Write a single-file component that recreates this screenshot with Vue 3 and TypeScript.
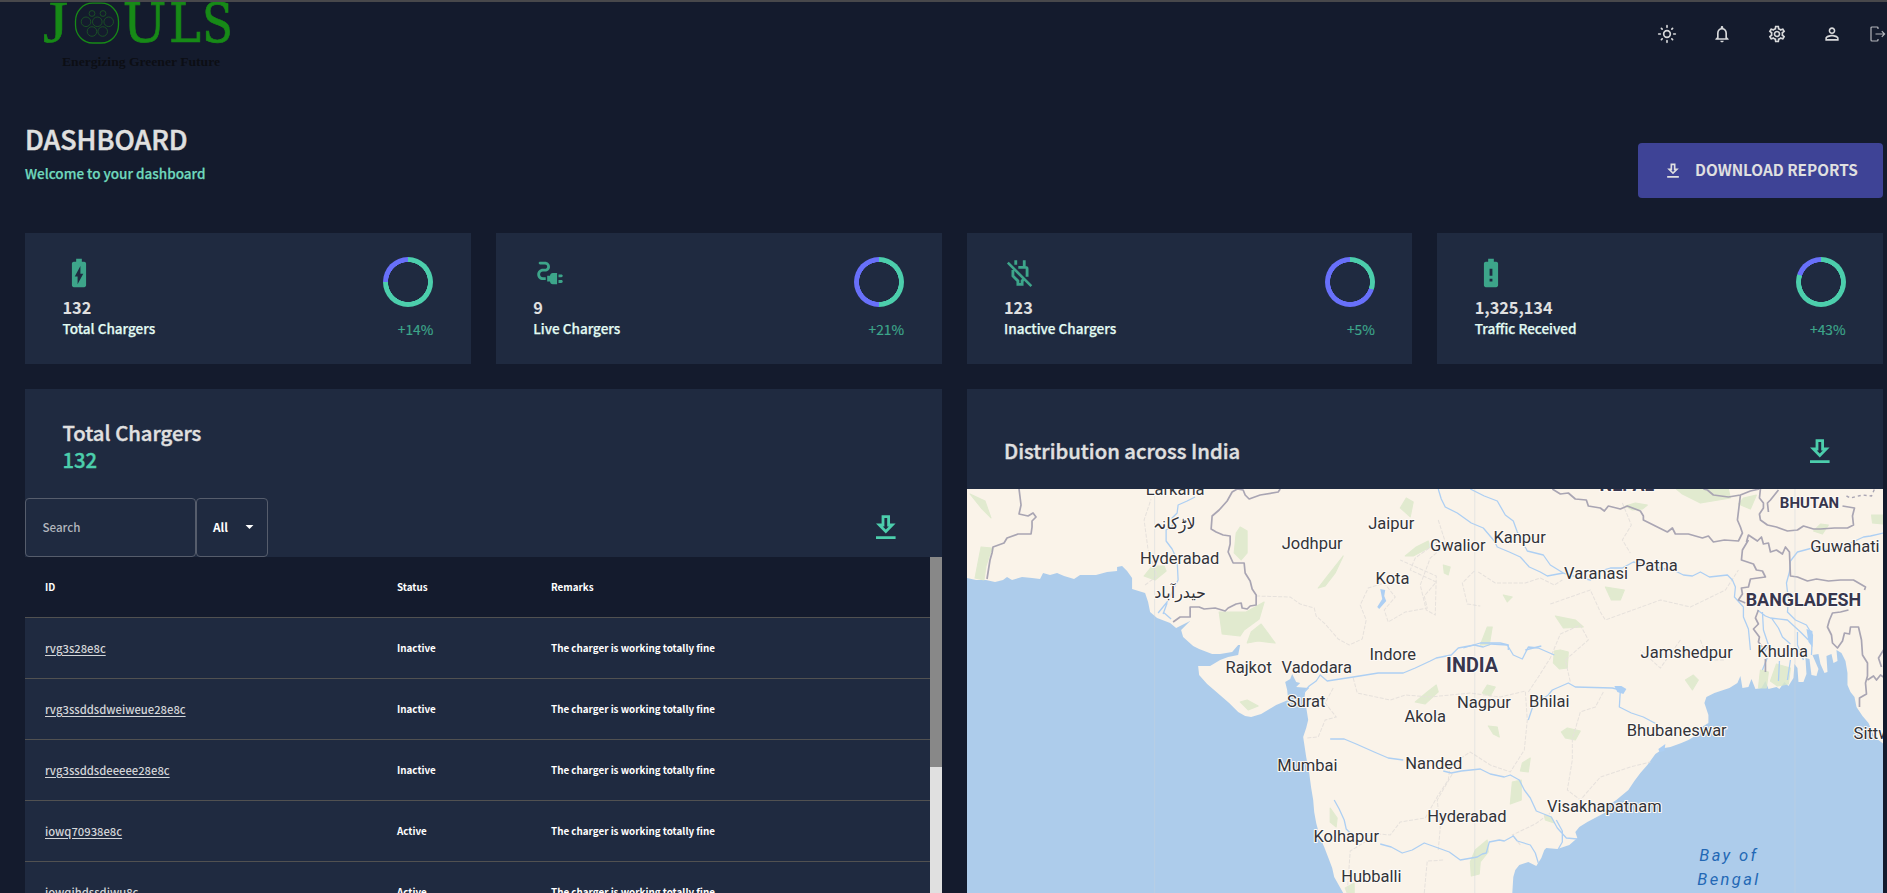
<script setup lang="ts">
interface Stat {
  icon: 'charging' | 'plug' | 'off' | 'alert'
  value: string
  label: string
  progress: number
  increase: string
}
interface Charger {
  id: string
  status: string
  remarks: string
}
interface MapLabel {
  text: string
  x: number
  y: number
  kind?: string
}

const stats: Stat[] = [
  { icon: 'charging', value: '132', label: 'Total Chargers', progress: 0.75, increase: '+14%' },
  { icon: 'plug', value: '9', label: 'Live Chargers', progress: 0.5, increase: '+21%' },
  { icon: 'off', value: '123', label: 'Inactive Chargers', progress: 0.3, increase: '+5%' },
  { icon: 'alert', value: '1,325,134', label: 'Traffic Received', progress: 0.8, increase: '+43%' },
]

const remarks = 'The charger is working totally fine'
const chargers: Charger[] = [
  { id: 'rvg3s28e8c', status: 'Inactive', remarks },
  { id: 'rvg3ssddsdweiweue28e8c', status: 'Inactive', remarks },
  { id: 'rvg3ssddsdeeeee28e8c', status: 'Inactive', remarks },
  { id: 'iowq70938e8c', status: 'Active', remarks },
  { id: 'iowqihdssdjwu8c', status: 'Active', remarks },
]

const ringStyle = (p: number) => ({
  background: `radial-gradient(closest-side, #1f2a40 78.5%, transparent 80.5%), conic-gradient(#4cceac 0deg ${p * 360}deg, #6870fa ${p * 360}deg 360deg)`,
})

const downloadPath = 'M19 9h-4V3H9v6H5l7 7 7-7zm-8 2V5h2v6h1.17L12 13.17 9.83 11H11zm-6 7h14v2H5z'
const batteryBody =
  'M15.67 4H14V2h-4v2H8.33C7.6 4 7 4.6 7 5.33v15.33C7 21.4 7.6 22 8.33 22h7.33c.74 0 1.34-.6 1.34-1.33V5.33C17 4.6 16.4 4 15.67 4z'

const land = [
  'M967 578 L976 580 986 580 995 582 1003 580 1007 577 1012 580 1022 577 1032 578 1040 579 1043 573 1050 575 1057 573 1064 576 1074 579 1080 575 1096 575 1107 572 1117 571 1117 567 1122 566 1127 571 1132 578 1132 589 1145 593 1148 602 1150 612 1157 618 1170 623 1176 628 1190 621 1181 630 1183 637 1193 646 1199 649 1212 654 1220 654 1232 652 1238 645 1240 645 1238 655 1228 657 1220 660 1210 666 1198 666 1199 675 1207 684 1214 690 1229 703 1238 712 1245 716 1251 717 1261 714 1276 705 1288 700 1287 690 1285 682 1290 679 1292 674 1296 682 1300 683 1296 687 1309 688 1305 692 1304 700 1306 707 1308 720 1306 728 1303 737 1306 757 1309 773 1311 788 1313 800 1314 812 1316 823 1320 838 1324 847 1329 860 1332 868 1334 877 1343 893',
  'L1512 893 1513 877 1515 870 1519 865 1528 862 1532 864 1536 866 1541 858 1544 850 1546 848 1557 849 1569 845 1577 838 1575 832 1579 827 1587 822 1604 813 1610 804 1616 800 1628 790 1634 781 1640 773 1647 765 1655 754 1664 748 1670 747 1681 743 1688 740 1693 737 1700 728 1708 723 1708 715 1704 703 1706 697 1714 693 1729 688 1737 683 1740 676 1742 688 1748 687 1751 679 1755 689 1761 688 1765 681 1768 689 1776 687 1779 689 1784 682 1788 686 1793 678 1794 664 1797 668 1798 682 1803 682 1806 674 1805 658 1809 659 1811 675 1816 676 1818 669 1812 655 1818 654 1820 664 1824 673 1827 672 1826 656 1831 654 1833 663 1837 661 1836 650 1841 653 1845 661 1847 673 1847 685 1850 692 1854 697 1856 707 1862 716 1868 723 1874 737 1883 744 1883 489 967 489Z',
].join(' ')

const borders = [
  'M1019 489 L1021 505 1019 514 1028 516 1033 513 1036 517 1032 521 1032 527 1031 534 1018 534 1007 538 1004 543 993 547 992 553 990 560 987 579',
  'M1280 489 L1278 492 1260 495 1249 499 1245 495 1243 490 1237 489 1232 492 1227 501 1219 510 1212 516 1211 529 1216 532 1223 535 1230 536 1230 544 1228 552 1233 563 1244 563 1245 573 1250 581 1252 589 1256 595 1256 605 1250 606 1247 609 1242 608 1241 603 1236 604 1228 608 1225 611 1215 608 1204 609 1199 607 1190 607 1190 617 1180 617 1173 622',
  'M1552 489 L1560 494 1568 493 1575 499 1586 500 1588 506 1600 508 1604 511 1608 506 1620 509 1627 506 1640 511 1643 516 1643 520 1657 527 1667 532 1672 528 1675 534 1688 534 1702 538 1708 536 1713 542 1724 540 1738 541 1742 533 1740 527 1737 520 1740 495 1728 497 1713 495 1707 490 1703 489M1740 495 L1750 491 1759 489',
  'M1760 489 L1759 498 1763 503 1763 508 1759 514 1760 520 1767 525 1776 527 1787 531 1797 530 1803 526 1813 529 1820 529 1834 528 1847 528 1853 525 1852 516 1854 508 1842 506M1768 512 L1767 503 1770 500 1778 490',
  'M1746 542 L1748 535 1757 541 1761 537 1763 544 1768 543 1770 552 1776 550 1782 554 1785 547 1789 552 1790 576 1797 577 1807 581 1816 579 1828 581 1840 580 1853 580 1865 587 1864 590',
  'M1748 540 L1742 550 1741 560 1753 564 1756 570 1762 571 1765 577 1750 579 1748 587 1741 588 1742 594 1738 600 1745 603M1758 610 L1755 618 1758 624 1753 629 1759 637 1758 642 1764 650M1765 659 L1765 672',
  'M1848 610 L1840 612 1832 613 1829 620 1827 627 1831 635 1832 643 1837 648 1842 641 1844 633 1849 634 1850 627 1858 627 1861 640 1862 655 1867 663 1867 676 1865 683 1866 694 1859 698 1859 707M1867 680 L1873 676 1876 680 1880 675 1883 677M1883 650 L1878 658 1881 667',
]

const rivers = [
  'M1195 497 L1187 501 1178 505 1177 513 1172 518 1173 525 1166 530 1166 541 1172 549 1177 560 1178 580 1172 592 1167 602 1158 613M1167 603 L1163 614M1163 612 L1171 619',
  'M1438 489 L1441 499 1445 507 1457 513 1471 523 1483 528 1494 541 1497 547 1509 552 1520 557 1529 567 1540 572 1547 576 1563 573',
  'M1470 489 L1484 496 1497 501 1505 515 1513 521 1517 532 1527 551 1543 555 1550 565 1563 573 1577 577 1590 580 1600 571 1610 568 1622 568 1633 562 1650 566 1675 571 1683 575 1692 576 1700 572 1709 577 1727 575 1732 580 1735 587 1734 597 1743 607 1743 617 1748 629 1750 650',
  'M1883 533 L1870 536 1863 537 1850 543 1830 550 1812 548 1797 552 1790 561 1789 572 1786 583 1788 600 1787 612 1795 620 1806 625 1812 635 1811 655',
  'M1757 610 L1765 616 1770 618 1787 620 1800 632 1808 640M1762 612 L1763 630 1768 645 1763 654M1771 618 L1778 628 1782 637 1790 644M1797 632 L1797 645 1803 660M1770 650 L1762 670M1779 661 L1778 681M1790 660 L1787 680',
  'M1303 693 L1309 686 1316 681 1320 675 1327 681 1353 677 1378 673 1403 673 1415 668 1430 661 1436 658 1451 655 1458 648 1474 645 1483 647 1491 644 1507 645 1513 655 1522 659 1528 647 1538 648 1554 655',
  'M1463 648 L1480 643 1500 643 1508 645 1508 650M1525 650 L1541 646',
  'M1528 720 L1532 708 1536 703 1548 695 1552 690 1568 683 1575 687 1612 688 1620 690 1619 707 1631 713 1643 717 1658 725',
  'M1330 739 L1344 739 1356 744 1374 752 1388 758 1403 760M1443 771 L1451 773 1461 771 1480 769 1490 774 1504 777 1510 775 1519 780 1524 790 1530 798 1536 811 1551 817 1557 828 1566 838 1577 839M1556 820 L1562 831 1562 842 1558 849',
  'M1334 800 L1339 809 1344 820 1346 829 1354 837M1380 844 L1391 847 1402 853 1412 850 1424 843 1438 848 1449 852 1460 860 1477 857 1482 854 1486 853 1489 842 1499 840 1504 841 1513 836 1517 841 1530 845 1535 853 1538 863',
]

const stateLines = [
  'M1256 596 L1290 597 1300 604 1314 608 1316 616 1325 624 1338 639 1349 645 1362 639 1366 620 1360 605 1368 588 1384 583 1395 597 1384 610 1388 622 1405 612 1427 608 1424 596 1436 582 1410 570 1415 558 1440 540',
  'M1145 585 L1157 576 1148 550 1144 520 1151 499',
  'M1438 520 L1446 545 1430 558 1420 585 1426 610 1435 615 1436 576 1400 560',
  'M1622 503 L1631 525 1622 540 1630 553M1478 572 L1495 583 1525 583 1540 578 1554 585 1562 580M1474 571 L1462 583 1467 604 1480 606',
  'M1550 604 L1590 590 1600 612 1605 620 1627 612 1660 600 1690 607 1725 590 1738 570',
  'M1353 678 L1357 693 1390 700 1405 695 1430 697 1470 693 1500 697 1525 691 1527 720 1524 750 1510 772 1490 765 1470 752 1450 765 1448 780 1438 795 1425 818 1400 822 1390 835 1378 834 1350 851 1347 893',
  'M1528 692 L1538 677 1550 658 1560 634 1580 625 1588 640 1565 660 1570 682',
  'M1603 692 L1595 707 1580 712 1572 739 1572 760 1567 790 1580 800 1600 777 1630 767 1650 762',
  'M1452 774 L1437 800 1440 828 1438 850M1520 845 L1512 835 1535 824 1550 813M1424 893 L1427 861 1444 860',
  'M1333 688 L1325 703 1336 717 1325 720 1318 737 1306 738M1680 640 L1660 668 1640 650M1700 640 L1708 660 1725 660',
]

const greens = [
  'M1240 527 L1247 531 1247 553 1241 560 1234 553 1236 533Z',
  'M1152 566 L1164 566 1166 571 1155 580 1144 576Z',
  'M1219 612 L1246 612 1264 602 1259 619 1244 630 1240 636 1222 634Z',
  'M1251 632 L1261 624 1275 643 1258 641 1247 643Z',
  'M1400 508 L1406 498 1413 502 1410 517Z',
  'M1405 556 L1416 547 1428 541 1430 547 1413 556Z',
  'M1318 588 L1328 575 1343 556 1335 573 1325 586Z',
  'M970 494 L985 501 991 518 982 509Z',
  'M981 547 L992 548 986 566 984 580 975 578Z',
  'M1625 506 L1635 503 1647 505 1642 509 1632 510Z',
  'M1676 489 L1728 489 1730 498 1700 503 1682 494Z',
  'M1743 498 L1756 495 1750 509 1738 504Z',
  'M1605 587 L1624 590 1620 600 1611 600Z',
  'M1555 616 L1575 620 1583 627 1563 628Z',
  'M1487 627 L1492 627 1489 645 1480 645Z',
  'M1554 651 L1560 650 1568 652 1567 668 1559 669 1553 663Z',
  'M1427 692 L1436 685 1438 692 1425 704 1415 702Z',
  'M1487 685 L1495 687 1490 696 1482 693Z',
  'M1488 726 L1497 727 1499 737 1493 734Z',
  'M1522 763 L1530 758 1528 772 1520 771Z',
  'M1512 782 L1521 780 1521 800 1510 804Z',
  'M1470 862 L1475 850 1487 840 1488 852 1480 862 1479 874 1471 876Z',
  'M1561 732 L1567 728 1580 731 1575 740 1565 738Z',
  'M1685 680 L1693 675 1698 680 1692 690Z',
  'M1760 670 L1768 672 1766 688 1758 688ZM1776 664 L1790 668 1788 684 1777 686 1770 681Z',
  'M1240 702 L1247 700 1258 706 1248 710Z',
  'M1330 808 L1337 818 1336 827 1330 822Z',
  'M1544 815 L1551 817 1554 823 1545 820Z',
  'M1820 524 L1828 525 1822 534 1813 531ZM1871 515 L1883 515 1883 524 1872 523Z',
  'M1345 888 L1354 883 1354 893 1347 893Z',
  'M1443 565 L1450 567 1448 575 1444 573ZM1503 595 L1512 597 1507 602Z',
]

const labels: MapLabel[] = [
  { text: 'Larkana', x: 1175, y: 495 },
  { text: 'لاڑکانہ', x: 1174, y: 529, kind: 'urdu' },
  { text: 'Hyderabad', x: 1179.5, y: 564 },
  { text: 'حیدرآباد', x: 1180, y: 598.5, kind: 'urdu' },
  { text: 'Jodhpur', x: 1312, y: 549 },
  { text: 'Jaipur', x: 1391, y: 529 },
  { text: 'Kota', x: 1392.3, y: 584 },
  { text: 'Gwalior', x: 1457.5, y: 551.5 },
  { text: 'Kanpur', x: 1519.3, y: 543.5 },
  { text: 'Varanasi', x: 1595.7, y: 579 },
  { text: 'Patna', x: 1656, y: 571 },
  { text: 'NEPAL', x: 1626.5, y: 491, kind: 'country' },
  { text: 'BHUTAN', x: 1809, y: 508.3, kind: 'country small' },
  { text: 'Guwahati', x: 1844.5, y: 552.3 },
  { text: 'BANGLADESH', x: 1803, y: 605.7, kind: 'country' },
  { text: 'Jamshedpur', x: 1686.3, y: 658 },
  { text: 'Khulna', x: 1782.2, y: 657.3 },
  { text: 'Indore', x: 1392.6, y: 660.4 },
  { text: 'INDIA', x: 1471.8, y: 672.3, kind: 'country big' },
  { text: 'Rajkot', x: 1248.5, y: 673.5 },
  { text: 'Vadodara', x: 1316.5, y: 673.5 },
  { text: 'Surat', x: 1306, y: 707 },
  { text: 'Akola', x: 1425, y: 722 },
  { text: 'Nagpur', x: 1483.7, y: 708.5 },
  { text: 'Bhilai', x: 1549, y: 706.7 },
  { text: 'Bhubaneswar', x: 1676.3, y: 735.7 },
  { text: 'Sittwe', x: 1876, y: 739 },
  { text: 'Mumbai', x: 1307.2, y: 771.3 },
  { text: 'Nanded', x: 1433.5, y: 768.7 },
  { text: 'Visakhapatnam', x: 1604, y: 812 },
  { text: 'Hyderabad', x: 1466.7, y: 822.5 },
  { text: 'Kolhapur', x: 1346, y: 842.3 },
  { text: 'Hubballi', x: 1371.2, y: 882.3 },
  { text: 'Bay of', x: 1728.5, y: 861, kind: 'water' },
  { text: 'Bengal', x: 1728.5, y: 885.5, kind: 'water' },
]
</script>

<template>
  <div class="app">
    <header class="topbar">
      <svg class="logo" width="200" height="72" viewBox="40 2 200 72">
        <g class="logo-word">
          <text x="43" y="41.7" textLength="25" lengthAdjust="spacingAndGlyphs" class="logo-j">J</text>
          <text x="122.5" y="41.7" textLength="44" lengthAdjust="spacingAndGlyphs">U</text>
          <text x="169" y="41.7" textLength="32" lengthAdjust="spacingAndGlyphs">L</text>
          <text x="202" y="41.7" textLength="31" lengthAdjust="spacingAndGlyphs">S</text>
        </g>
        <rect x="75.5" y="3.2" width="43" height="39.8" rx="17" ry="18" fill="none" stroke="#178a17" stroke-width="1.3" />
        <g fill="none" stroke="#1c5a24" stroke-width="0.8">
          <circle cx="92" cy="13.5" r="2.9" />
          <circle cx="103" cy="13.5" r="2.9" />
          <circle cx="86" cy="21.8" r="4.8" />
          <circle cx="97.3" cy="21.8" r="4.8" />
          <circle cx="108.7" cy="21.8" r="4.8" />
          <circle cx="92" cy="31.5" r="4.8" />
          <circle cx="102.7" cy="31.5" r="4.8" />
        </g>
        <text class="logo-tag" x="62" y="65.5" textLength="158" lengthAdjust="spacingAndGlyphs">Energizing Greener Future</text>
      </svg>
      <nav class="actions">
        <svg class="ico" viewBox="0 0 24 24">
          <g fill="none" stroke="currentColor" stroke-width="2" stroke-linecap="round">
            <circle cx="12" cy="12" r="4" />
            <path d="M12 2v2M12 20v2M2 12h2M20 12h2M5.3 5.3l.9.9M17.8 17.8l.9.9M5.3 18.7l.9-.9M17.8 6.2l.9-.9" />
          </g>
        </svg>
        <svg class="ico" viewBox="0 0 24 24">
          <path fill="currentColor" d="M12 22c1.1 0 2-.9 2-2h-4c0 1.1.9 2 2 2zm6-6v-5c0-3.07-1.63-5.64-4.5-6.32V4c0-.83-.67-1.5-1.5-1.5s-1.5.67-1.5 1.5v.68C7.64 5.36 6 7.92 6 11v5l-2 2v1h16v-1l-2-2zm-2 1H8v-6c0-2.48 1.51-4.5 4-4.5s4 2.02 4 4.5v6z" />
        </svg>
        <svg class="ico" viewBox="0 0 24 24">
          <path fill="currentColor" d="M19.43 12.98c.04-.32.07-.64.07-.98 0-.34-.03-.66-.07-.98l2.11-1.65c.19-.15.24-.42.12-.64l-2-3.46c-.09-.16-.26-.25-.44-.25-.06 0-.12.01-.17.03l-2.49 1c-.52-.4-1.08-.73-1.69-.98l-.38-2.65C14.46 2.18 14.25 2 14 2h-4c-.25 0-.46.18-.49.42l-.38 2.65c-.61.25-1.17.59-1.69.98l-2.49-1c-.06-.02-.12-.03-.18-.03-.17 0-.34.09-.43.25l-2 3.46c-.13.22-.07.49.12.64l2.11 1.65c-.04.32-.07.65-.07.98 0 .33.03.66.07.98l-2.11 1.65c-.19.15-.24.42-.12.64l2 3.46c.09.16.26.25.44.25.06 0 .12-.01.17-.03l2.49-1c.52.4 1.08.73 1.69.98l.38 2.65c.03.24.24.42.49.42h4c.25 0 .46-.18.49-.42l.38-2.65c.61-.25 1.17-.59 1.69-.98l2.49 1c.06.02.12.03.18.03.17 0 .34-.09.43-.25l2-3.46c.12-.22.07-.49-.12-.64l-2.11-1.65zm-1.98-1.71c.04.31.05.52.05.73 0 .21-.02.43-.05.73l-.14 1.13.89.7 1.08.84-.7 1.21-1.27-.51-1.04-.42-.9.68c-.43.32-.84.56-1.25.73l-1.06.43-.16 1.13-.2 1.35h-1.4l-.19-1.35-.16-1.13-1.06-.43c-.43-.18-.83-.41-1.23-.71l-.91-.7-1.06.43-1.27.51-.7-1.21 1.08-.84.89-.7-.14-1.13c-.03-.31-.05-.54-.05-.74s.02-.43.05-.73l.14-1.13-.89-.7-1.08-.84.7-1.21 1.27.51 1.04.42.9-.68c.43-.32.84-.56 1.25-.73l1.06-.43.16-1.13.2-1.35h1.39l.19 1.35.16 1.13 1.06.43c.43.18.83.41 1.23.71l.91.7 1.06-.43 1.27-.51.7 1.21-1.07.85-.89.7.14 1.13zM12 8c-2.21 0-4 1.79-4 4s1.79 4 4 4 4-1.79 4-4-1.79-4-4-4zm0 6c-1.1 0-2-.9-2-2s.9-2 2-2 2 .9 2 2-.9 2-2 2z" />
        </svg>
        <svg class="ico" viewBox="0 0 24 24">
          <path fill="currentColor" d="M12 5.9c1.16 0 2.1.94 2.1 2.1s-.94 2.1-2.1 2.1S9.9 9.16 9.9 8s.94-2.1 2.1-2.1m0 9c2.97 0 6.1 1.46 6.1 2.1v1.1H5.9V17c0-.64 3.13-2.1 6.1-2.1M12 4C9.79 4 8 5.79 8 8s1.79 4 4 4 4-1.79 4-4-1.79-4-4-4zm0 9c-2.67 0-8 1.34-8 4v3h16v-3c0-2.66-5.33-4-8-4z" />
        </svg>
        <svg class="logout" viewBox="0 0 16 16">
          <path fill="none" stroke="currentColor" stroke-width="1.2" d="M8 3V2Q8 1 7 1H2Q1 1 1 2V14Q1 15 2 15H7Q8 15 8 14V13M5.5 8H14.5M11.8 5.2L14.6 8 11.8 10.8" />
        </svg>
      </nav>
    </header>

    <section class="heading">
      <div>
        <h1>DASHBOARD</h1>
        <p>Welcome to your dashboard</p>
      </div>
      <button class="download" type="button">
        <svg viewBox="0 0 24 24"><path fill="currentColor" :d="downloadPath" /></svg>
        <span>DOWNLOAD REPORTS</span>
      </button>
    </section>

    <main class="grid">
      <article v-for="s in stats" :key="s.label" class="stat">
        <div class="stat-left">
          <svg class="stat-icon" viewBox="0 0 24 24">
            <path v-if="s.icon === 'charging'" fill="currentColor" fill-rule="evenodd" :d="batteryBody + 'M11 20v-5.5H9L13 7v5.5h2L11 20z'" />
            <path v-else-if="s.icon === 'alert'" fill="currentColor" fill-rule="evenodd" :d="batteryBody + 'M13 18h-2v-2h2v2zm0-4h-2V9h2v5z'" />
            <path v-else-if="s.icon === 'plug'" fill="currentColor" d="M21 14c0-.55-.45-1-1-1h-2v2h2c.55 0 1-.45 1-1zm-1 3h-2v2h2c.55 0 1-.45 1-1s-.45-1-1-1zm-8-3h-2v4h2c0 1.1.9 2 2 2h3v-8h-3c-1.1 0-2 .9-2 2zM5 13c0-1.1.9-2 2-2h1.5c1.93 0 3.5-1.57 3.5-3.5S10.43 4 8.5 4H5c-.55 0-1 .45-1 1s.45 1 1 1h3.5c.83 0 1.5.67 1.5 1.5S9.33 9 8.5 9H7c-2.21 0-4 1.79-4 4s1.79 4 4 4h2v-2H7c-1.1 0-2-.9-2-2z" />
            <g v-else fill="none" stroke="currentColor" stroke-width="2">
              <path d="M3.4 4.7L20 21.3" stroke-width="1.8" />
              <path d="M9 3v3.2M15 3v5M10.8 8H16Q17 8 17 9V14.6M7 9.8V14.07L10.5 17.6V20H13.5V17.6L14.6 16.5" />
            </g>
          </svg>
          <strong>{{ s.value }}</strong>
          <span>{{ s.label }}</span>
        </div>
        <div class="stat-right">
          <div class="ring" :style="ringStyle(s.progress)"></div>
          <em>{{ s.increase }}</em>
        </div>
      </article>

      <section class="panel">
        <div class="panel-title">
          <h2>Total Chargers</h2>
          <h2 class="green">132</h2>
        </div>
        <div class="toolbar">
          <div class="search">Search</div>
          <div class="select">
            <span>All</span>
            <svg viewBox="0 0 24 24"><path fill="currentColor" d="M7 10l5 5 5-5z" /></svg>
          </div>
          <svg class="dl" viewBox="0 0 24 24"><path fill="currentColor" :d="downloadPath" /></svg>
        </div>
        <div class="table-wrap">
          <div class="table">
            <div class="row head">
              <span>ID</span><span>Status</span><span>Remarks</span>
            </div>
            <div v-for="c in chargers" :key="c.id" class="row">
              <a>{{ c.id }}</a><span>{{ c.status }}</span><span>{{ c.remarks }}</span>
            </div>
          </div>
          <div class="scroll"><div class="thumb"></div></div>
        </div>
      </section>

      <section class="panel">
        <div class="map-title">
          <h2>Distribution across India</h2>
          <svg class="dl" viewBox="0 0 24 24"><path fill="currentColor" :d="downloadPath" /></svg>
        </div>
        <svg class="map" viewBox="967 489 916 404" preserveAspectRatio="none">
          <rect x="967" y="489" width="916" height="404" fill="#adcceb" />
          <path :d="land" fill="#faf3e9" />
          <g fill="#dbe9c9" stroke="#dbe9c9" stroke-width="1" stroke-linejoin="round" opacity="0.8">
            <path v-for="(d, i) in greens" :key="i" :d="d" />
          </g>
          <g fill="none" stroke="#e6e1dc" stroke-width="1" stroke-dasharray="4 1.5">
            <path v-for="(d, i) in stateLines" :key="i" :d="d" />
          </g>
          <g fill="none" stroke="#adcff3" stroke-width="1.3" stroke-linejoin="round">
            <path v-for="(d, i) in rivers" :key="i" :d="d" />
          </g>
          <path d="M1380 589l5 1-1 6 2 5-7 8-2-2 5-8-1-5zM1614 686l7 0 5 3-3 5-6-2zM1658 749l7-5-1 7-5 1zM1806 629l6 2v16l-4-5z" fill="#adcff3" />
          <g fill="none" stroke="#a9a5b3" stroke-width="1.7" stroke-linejoin="round">
            <path v-for="(d, i) in borders" :key="i" :d="d" />
          </g>
          <path d="M1846 496L1850 498 1862 495 1871 496 1874 489" fill="none" stroke="#a9a5b3" stroke-width="1.4" stroke-dasharray="3 3" />
          <path d="M1154.5 489V893M1474.5 489V893M1794.5 489V893" stroke="#c9d3dc" stroke-width="1" opacity="0.4" />
          <text v-for="(l, i) in labels" :key="i" :x="l.x" :y="l.y" :class="['place', l.kind]">{{ l.text }}</text>
        </svg>
      </section>
    </main>
  </div>
</template>

<style scoped>
.app {
  box-sizing: border-box;
  width: 1887px;
  height: 893px;
  overflow: hidden;
  background: #141b2d;
  border-top: 2px solid #48484b;
  color: #e0e0e0;
  font-family: "Noto Sans CJK JP", "Open Sans", sans-serif;
  font-weight: 500;
}
h1, h2, p { margin: 0; font-weight: 500; }
.topbar {
  display: flex;
  justify-content: space-between;
  height: 118px;
  padding-left: 40px;
}
.logo { display: block; }
.logo-word {
  font-family: "DejaVu Serif", serif;
  font-size: 54px;
  fill: #178a17;
  stroke: #178a17;
  stroke-width: 0.7px;
}
.logo-j {
  font-family: "Liberation Serif", serif;
  font-size: 60px;
  stroke-width: 0.6px;
}
.logo-tag {
  font-family: "Liberation Serif", serif;
  font-weight: 700;
  font-size: 13.5px;
  fill: #0c0e14;
}
.actions {
  display: flex;
  gap: 35.2px;
  padding-top: 22px;
  color: #d8d9db;
}
.ico { width: 20px; height: 20px; }
.logout { width: 16px; height: 16px; margin: 1.5px 1px 0 -7.5px; color: #b4b6bb; }
.heading {
  display: flex;
  justify-content: space-between;
  align-items: flex-start;
  height: 113px;
  padding: 0 4px 0 25px;
}
h1 { font-size: 26.9px; line-height: 36px; padding-top: 1px; -webkit-text-stroke: 0.5px currentColor; }
.heading p { font-size: 13.5px; line-height: 20px; color: #70d8bd; padding-top: 5.5px; -webkit-text-stroke: 0.25px currentColor; }
.download {
  display: flex;
  align-items: center;
  box-sizing: border-box;
  width: 245px;
  height: 55px;
  margin: 23px 0 0;
  padding: 0 0 0 25px;
  border: 0;
  border-radius: 4px;
  background: #3e4396;
  color: #e0e0e0;
  font: 700 15.3px/20px "Noto Sans CJK JP", sans-serif;
  white-space: nowrap;
}
.download svg { width: 20px; height: 20px; margin-right: 12px; }
.download span { padding-bottom: 3px; }
.grid {
  display: grid;
  grid-template-columns: repeat(4, 1fr);
  grid-template-rows: 131px 504px;
  gap: 25px;
  padding: 0 4px 0 25px;
}
.stat {
  display: flex;
  justify-content: space-between;
  padding: 24px 37.5px 0;
  background: #1f2a40;
}
.stat-left, .stat-right { display: flex; flex-direction: column; }
.stat-left { margin-top: -1px; }
.stat-icon { width: 34px; height: 34px; margin-left: -0.6px; color: #3da58a; }
.stat-left strong { font-size: 16.3px; font-weight: 700; line-height: 22px; margin-top: 5.5px; }
.stat-left span { font-size: 13.55px; line-height: 20px; color: #e2fbf3; margin-top: 0; -webkit-text-stroke: 0.25px currentColor; }
.stat-right { align-items: flex-end; }
.ring { width: 50px; height: 50px; border-radius: 50%; }
.stat-right em { font-style: normal; font-weight: 400; font-size: 13.7px; line-height: 20px; color: #3da58a; margin-top: 11.5px; -webkit-text-stroke: 0.2px currentColor; }
.panel { grid-column: span 2; background: #1f2a40; overflow: hidden; }
h2 { font-size: 20.3px; line-height: 27px; -webkit-text-stroke: 0.4px currentColor; }
.panel-title { box-sizing: border-box; height: 109px; padding: 30px 37.5px 0; }
.green { color: #4cceac; }
.toolbar { display: flex; align-items: center; height: 59px; }
.search, .select {
  box-sizing: border-box;
  display: flex;
  align-items: center;
  height: 59px;
  border: 1px solid #565d6c;
  border-radius: 4px;
}
.search { width: 171px; padding: 0 0 2px 16.5px; font-size: 11.6px; color: #b3b7be; }
.select { width: 72px; padding: 0 0 2px 16px; font-size: 11.9px; font-weight: 700; color: #fff; }
.select span { width: 27px; }
.select svg { width: 19px; height: 19px; }
.dl { width: 33.6px; height: 33.6px; color: #4cceac; }
.toolbar .dl { margin: 0 39.2px 0 auto; }
.table-wrap { display: flex; height: 336px; }
.table { flex: 1; }
.row {
  box-sizing: border-box;
  display: grid;
  grid-template-columns: 352px 154px 1fr;
  align-items: center;
  height: 61px;
  padding-left: 20px;
  border-bottom: 1px solid #515151;
  color: #fff;
  font-size: 9.82px;
  font-weight: 700;
}
.row a { font-size: 11.25px; font-weight: 500; color: #d3d5d8; text-decoration: underline; text-underline-offset: 1.5px; }
.head { background: #141b2d; }
.scroll { width: 12px; background: #e0e0e0; }
.thumb { height: 210px; background: #888; }
.map-title {
  display: flex;
  justify-content: space-between;
  height: 70px;
  padding: 30px 46.5px 0 37.5px;
}
.map-title h2 { line-height: 62px; }
.map-title .dl { margin-top: 15.5px; }
.map { display: block; width: 100%; height: 404px; }
.place {
  font-family: Roboto, sans-serif;
  font-size: 16.5px;
  font-weight: 400;
  fill: #333338;
  stroke: #fdfaf6;
  stroke-width: 2.2px;
  paint-order: stroke;
  stroke-linejoin: round;
  text-anchor: middle;
}
.urdu { font-family: "DejaVu Sans", sans-serif; font-size: 16px; }
.country { font-weight: 700; font-size: 17.9px; fill: #37364d; }
.small { font-size: 15px; }
.big { font-size: 19.8px; }
.water {
  font-style: italic;
  fill: #2368b5;
  stroke: none;
  letter-spacing: 2.4px;
}
</style>

<style>
body { background: #141b2d; overflow: hidden; }
</style>
